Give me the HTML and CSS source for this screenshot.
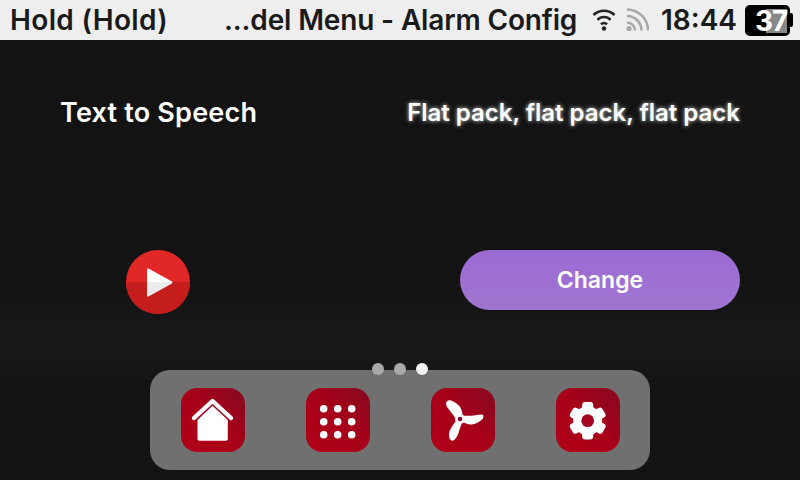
FILE: index.html
```html
<!DOCTYPE html>
<html lang="en">
<head>
    <meta charset="UTF-8">
    <title>Alarm Config</title>
    <link rel="stylesheet" href="styles.css">
</head>
<body>

<div class="screen">
    <div class="status-bar">
        <span class="status-left">Hold (Hold)</span>
        <span class="status-title">...del Menu - Alarm Config</span>
        <svg class="wifi" viewBox="0 0 24 24" width="24" height="24">
            <g fill="none" stroke="#222" stroke-width="2.6">
                <path d="M1.5 7a15 15 0 0 1 21 0"/>
                <path d="M5.5 11.8a9 9 0 0 1 13 0"/>
                <path d="M9 16.3a4.2 4.2 0 0 1 6 0"/>
            </g>
            <circle cx="12" cy="20.5" r="2.2" fill="#222"/>
        </svg>
        <svg class="signal" viewBox="0 0 24 24" width="24" height="24">
            <g fill="none" stroke="#a8a8a8" stroke-width="2.6">
                <path d="M2 1.5a21 21 0 0 1 21 21"/>
                <path d="M2 8a14.5 14.5 0 0 1 14.5 14.5"/>
                <path d="M2 14.5a8 8 0 0 1 8 8"/>
            </g>
            <circle cx="4" cy="20.5" r="2.6" fill="#a8a8a8"/>
        </svg>
        <span class="clock">18:44</span>
        <div class="battery">
            <div class="battery-body"><div class="battery-fill"></div></div>
            <div class="battery-tip"></div>
            <span class="battery-num">37</span>
        </div>
    </div>

    <div class="content">
        <div class="row row-text">
            <div class="tts-label">Text to Speech</div>
            <div class="tts-value">Flat pack, flat pack, flat pack</div>
        </div>
        <div class="row row-controls">
            <div class="play-btn"><div class="play-half"></div>
                <svg class="play-icon" viewBox="0 0 28 31" width="28" height="31">
                    <defs>
                        <linearGradient id="playFill" x1="0" y1="0" x2="0" y2="1">
                            <stop offset="0.5" stop-color="#ffffff"/>
                            <stop offset="0.5" stop-color="#ececec"/>
                        </linearGradient>
                    </defs>
                    <path d="M2 2.5 L25.5 15.5 L2 28.5 Z" fill="url(#playFill)" stroke="url(#playFill)" stroke-width="2" stroke-linejoin="round"/>
                </svg>
            </div>
            <div class="change-btn">Change</div>
        </div>
    </div>

    <div class="dock-wrap">
        <div class="dots">
            <span class="dot"></span>
            <span class="dot"></span>
            <span class="dot active"></span>
        </div>
        <div class="dock">
            <div class="dock-icon">
                <svg viewBox="0 0 64 64" width="64" height="64">
                    <path d="M13 30 L31.5 13 L50 30" fill="none" stroke="#fff" stroke-width="4.4" stroke-linecap="round" stroke-linejoin="round"/>
                    <path d="M16.5 32 L31.5 17.8 L46.8 32 V51 a1.8 1.8 0 0 1 -1.8 1.8 H18.3 a1.8 1.8 0 0 1 -1.8 -1.8 Z" fill="#fff"/>
                </svg>
            </div>
            <div class="dock-icon">
                <svg viewBox="0 0 64 64" width="64" height="64" fill="#fff">
                    <circle cx="17.7" cy="20.7" r="3.8"/><circle cx="31.7" cy="20.7" r="3.8"/><circle cx="45.7" cy="20.7" r="3.8"/>
                    <circle cx="17.7" cy="33.7" r="3.8"/><circle cx="31.7" cy="33.7" r="3.8"/><circle cx="45.7" cy="33.7" r="3.8"/>
                    <circle cx="17.7" cy="46.7" r="3.8"/><circle cx="31.7" cy="46.7" r="3.8"/><circle cx="45.7" cy="46.7" r="3.8"/>
                </svg>
            </div>
            <div class="dock-icon">
                <svg viewBox="0 0 64 64" width="64" height="64" fill="#fff">
                    <path d="M15 16 C15 13.5 17.5 11.5 20 12.5 C25 14.5 29.5 18 30.5 22 C31 24 31.5 26 32 28 L26 33 C23 27 18 22 16 19 Z"/>
                    <path d="M32 27.5 C38 28.5 46 27 51.5 26.5 C52.5 26.5 52.5 29 52 30.5 C49 33.5 45 36 41 36.5 C37 37 34 35 31 34 Z"/>
                    <path d="M25 33 L31 35 C29.5 38 28.5 42 27.5 45 C26.5 48 24 52 22 52.8 C19.5 53 18 50 18 47 C18 42 22 37 25 33 Z"/>
                    <circle cx="29" cy="31" r="5"/>
                    <circle cx="29" cy="31" r="2.3" fill="#8e0a20"/>
                </svg>
            </div>
            <div class="dock-icon">
                <svg viewBox="0 0 64 64" width="64" height="64" fill="#fff">
                    <g transform="translate(31.7 32.7)">
                        <circle r="14.5"/>
                        <rect x="-5.5" y="-18.7" width="11" height="10" rx="3"/>
                        <rect x="-5.5" y="-18.7" width="11" height="10" rx="3" transform="rotate(60)"/>
                        <rect x="-5.5" y="-18.7" width="11" height="10" rx="3" transform="rotate(120)"/>
                        <rect x="-5.5" y="-18.7" width="11" height="10" rx="3" transform="rotate(180)"/>
                        <rect x="-5.5" y="-18.7" width="11" height="10" rx="3" transform="rotate(240)"/>
                        <rect x="-5.5" y="-18.7" width="11" height="10" rx="3" transform="rotate(300)"/>
                        <circle r="6.4" fill="#a20520"/>
                    </g>
                </svg>
            </div>
        </div>
    </div>
</div>

</body>
</html>
```

FILE: styles.css
```css
* {
    box-sizing: border-box;
}
body {
    margin: 0;
    font-family: Inter, "Noto Sans", sans-serif;
}
.screen {
    width: 800px;
    height: 480px;
    display: flex;
    flex-direction: column;
    overflow: hidden;
    background: linear-gradient(to bottom, #131313 0, #131313 290px, #191919 345px, #131313 385px);
}

/* status bar */
.status-bar {
    height: 40px;
    flex: none;
    display: flex;
    align-items: center;
    padding-left: 10px;
    background-color: #eeeeee;
    color: #1a1a1a;
    font-size: 28px;
    font-weight: 600;
    white-space: nowrap;
}
.status-left {
    width: 214px;
    letter-spacing: 0.35px;
}
.status-title {
    width: 368px;
    letter-spacing: -0.15px;
}
.wifi {
    flex: none;
}
.signal {
    flex: none;
    margin-left: 9px;
}
.clock {
    margin-left: 12px;
    width: 84px;
}
.battery {
    position: relative;
    display: flex;
    align-items: center;
    width: 49px;
    height: 31px;
}
.battery-body {
    width: 45px;
    height: 31px;
    padding: 4px 3px 3px 21px;
    background-color: #000;
    border-radius: 5px;
}
.battery-fill {
    height: 100%;
    background-color: #888;
}
.battery-tip {
    width: 3px;
    height: 14px;
    background-color: #000;
    border-radius: 0 2px 2px 0;
}
.battery-num {
    position: absolute;
    left: 10px;
    top: 0;
    color: #fff;
    font-weight: 700;
    font-size: 28px;
    letter-spacing: -1px;
    line-height: 32px;
}

/* main area */
.content {
    flex: 1;
    display: flex;
    flex-direction: column;
}
.row {
    display: flex;
    align-items: center;
    justify-content: space-between;
}
.row-text {
    height: 64px;
    margin-top: 40px;
    padding: 0 60px;
}
.tts-label {
    color: #fff;
    font-size: 27px;
    font-weight: 600;
    letter-spacing: 0.2px;
}
.tts-value {
    color: #fff;
    font-size: 24px;
    font-weight: 600;
    text-shadow: 0 0 4px rgba(255, 255, 255, 0.8);
}
.row-controls {
    margin-top: 106px;
    align-items: flex-start;
    padding: 0 60px 0 126px;
}
.play-btn {
    position: relative;
    width: 64px;
    height: 64px;
    border-radius: 50%;
    overflow: hidden;
    background-color: #e22826;
}
.play-half {
    height: 32px;
    margin-top: 32px;
    background-color: #c41d1c;
}
.play-icon {
    position: absolute;
    left: 20px;
    top: 17px;
}
.change-btn {
    width: 280px;
    height: 60px;
    border-radius: 30px;
    background: linear-gradient(to bottom, #9b6bd3, #a075d0);
    color: #fff;
    font-size: 23px;
    font-weight: 600;
    line-height: 60px;
    text-align: center;
}

/* bottom dock */
.dock-wrap {
    position: relative;
    flex: none;
    width: 500px;
    margin: 0 auto 10px;
}
.dots {
    position: absolute;
    top: -7px;
    left: 222px;
    display: flex;
    gap: 10px;
}
.dot {
    width: 12px;
    height: 12px;
    border-radius: 50%;
    background-color: #a8a8a8;
}
.dot.active {
    background-color: #f2f2f2;
}
.dock {
    height: 100px;
    display: flex;
    align-items: center;
    justify-content: center;
    gap: 61px;
    background-color: #707070;
    border-radius: 20px;
}
.dock-icon {
    width: 64px;
    height: 64px;
    border-radius: 16px;
    background: linear-gradient(45deg, #b00018 0, #a80019 50%, #850a20 100%);
}
.dock-icon svg {
    display: block;
}
```
